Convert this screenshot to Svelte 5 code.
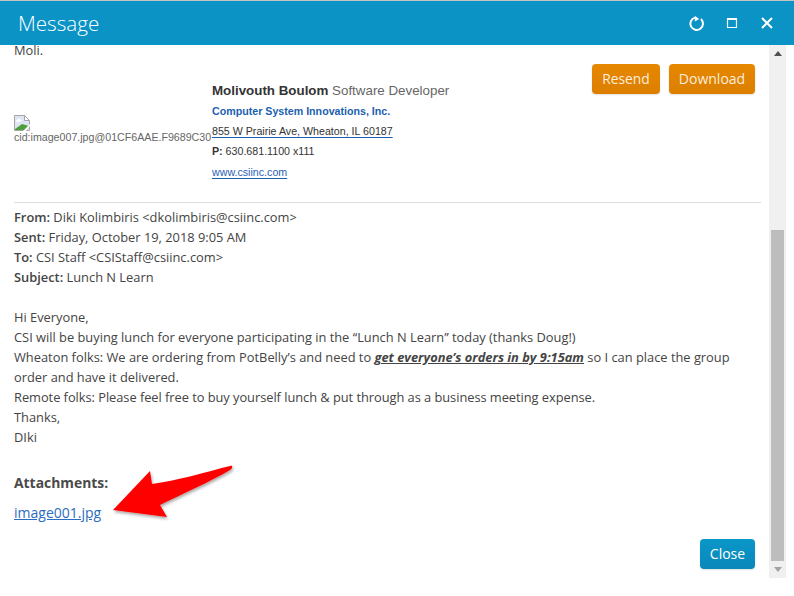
<script>
  const headers = [
    ['From:', 'Diki Kolimbiris <dkolimbiris@csiinc.com>'],
    ['Sent:', 'Friday, October 19, 2018 9:05 AM'],
    ['To:', 'CSI Staff <CSIStaff@csiinc.com>'],
    ['Subject:', 'Lunch N Learn']
  ];
</script>

<div class="dialog">
  <header class="titlebar">
    <h1>Message</h1>
    <div class="tools">
      <svg width="18" height="18" viewBox="0 0 18 18" fill="none" stroke="#fff" stroke-width="2">
        <path d="M7 3.6A6.3 6.3 0 1 0 13 5.1" />
        <path d="M6.8 1.8 L11.2 5 L6.8 7.6 Z" fill="#fff" stroke="none" />
      </svg>
      <svg width="12" height="12" viewBox="0 0 12 12" fill="none" stroke="#fff">
        <path d="M1.5 2 H10.5 V10.5 H1.5 Z" stroke-width="1.2" />
        <path d="M1 2 H11" stroke-width="2" />
      </svg>
      <svg class="x" width="14" height="14" viewBox="0 0 14 14" fill="none" stroke="#fff" stroke-width="2">
        <path d="M2 2 L12 12 M12 2 L2 12" />
      </svg>
    </div>
  </header>

  <div class="main">
    <div class="content">
      <p class="moli">Moli.</p>
      <div class="signature">
        <div class="broken">
          <svg width="16" height="16" viewBox="0 0 16 16">
            <path d="M0.5 0.5 H10.5 L15.5 5.5 V15.5 H0.5 Z" fill="#dfe6f3" stroke="#a5a5a5" />
            <path d="M10.5 0.5 V5.5 H15.5 Z" fill="#fff" stroke="#a5a5a5" />
            <path d="M2 6 C4 3 7 4 8 6 C6 6 4 7 2 7 Z" fill="#fff" />
            <path d="M1 15 L1 14 L8 9 L15 11 L12 15 Z" fill="#4f9e3c" />
            <path d="M9 16 L16 9 V11 L12 16 Z" fill="#fff" />
          </svg>
          <span>cid:image007.jpg@01CF6AAE.F9689C30</span>
        </div>
        <div class="card">
          <div class="name"><b>Molivouth Boulom</b> <span>Software Developer</span></div>
          <div class="company">Computer System Innovations, Inc.</div>
          <div class="addr"><span>855 W Prairie Ave, Wheaton, IL 60187</span></div>
          <div class="phone"><b>P:</b> 630.681.1100 x111</div>
          <div class="web"><span>www.csiinc.com</span></div>
        </div>
      </div>
      <hr />
      <div class="meta">
        {#each headers as [k, v]}
          <div><b>{k}</b> {v}</div>
        {/each}
      </div>
      <div class="body">
        <div>Hi Everyone,</div>
        <div>CSI will be buying lunch for everyone participating in the “Lunch N Learn” today (thanks Doug!)</div>
        <div>Wheaton folks: We are ordering from PotBelly’s and need to <b class="em">get everyone’s orders in by 9:15am</b> so I can place the group order and have it delivered.</div>
        <div class="tight">Remote folks: Please feel free to buy yourself lunch &amp; put through as a business meeting expense.</div>
        <div>Thanks,</div>
        <div>DIki</div>
      </div>
      <div class="att-label">Attachments:</div>
      <div class="att-link">image001.jpg</div>
      <div class="footer"><button class="close">Close</button></div>
    </div>
    <div class="scrollbar">
      <svg class="arrow" width="8" height="5" viewBox="0 0 8 5"><path d="M0 5 L4 0 L8 5 Z" fill="#505050" /></svg>
      <div class="track"><div class="thumb"></div></div>
      <svg class="arrow" width="8" height="5" viewBox="0 0 8 5"><path d="M0 0 L4 5 L8 0 Z" fill="#a3a3a3" /></svg>
    </div>

    <div class="actions">
      <button class="orange">Resend</button>
      <button class="orange">Download</button>
    </div>

    <svg class="pointer" width="120" height="55" viewBox="0 0 120 55">
      <defs>
        <filter id="sh" x="-20%" y="-20%" width="140%" height="150%">
          <feDropShadow dx="1" dy="2" stdDeviation="1.5" flood-color="#000" flood-opacity="0.35" />
        </filter>
      </defs>
      <path d="M-1 45 L36 6 L38 19 C62 16 92 7 116 1 C119 0 119 3 116 5 C96 17 70 28 46 40 L53 52 Z"
        fill="#fe0000" filter="url(#sh)" />
    </svg>
  </div>
</div>

<style>
  :global(body) { margin: 0; background: #fff; }
  .dialog {
    width: 794px;
    height: 596px;
    display: flex;
    flex-direction: column;
    border-top: 1px solid #c4c4c4;
    box-sizing: border-box;
    overflow: hidden;
    font-family: "Open Sans", sans-serif;
    font-size: 12.85px;
    color: #444;
  }
  .titlebar {
    height: 44px;
    flex: none;
    background: #0b93c6;
    display: flex;
    align-items: center;
    justify-content: space-between;
    padding: 0 20px 0 18px;
  }
  h1 {
    margin: 0;
    font-size: 20.6px;
    font-weight: 300;
    color: #fff;
    line-height: 1;
  }
  .tools { display: flex; align-items: center; gap: 20px; }
  .x { margin-left: 2px; }
  .main { position: relative; flex: 1; display: flex; min-height: 0; padding-right: 8px; padding-bottom: 18px; }
  .content { flex: 1; min-width: 0; padding: 0 8px 0 14px; overflow: hidden; display: flex; flex-direction: column; }
  .moli { margin: 0; line-height: 10px; height: 12px; }
  .signature { display: flex; height: 145px; box-sizing: border-box; }
  .broken { width: 198px; padding-top: 58px; white-space: nowrap; font-family: "Liberation Sans", sans-serif; font-size: 10.65px; color: #666; line-height: 12px; }
  .broken svg { display: block; }
  .card { font-family: "Liberation Sans", sans-serif; padding-top: 24px; font-size: 10.66px; color: #333; white-space: nowrap; }
  .card > div { height: 20px; line-height: 20px; }
  .name { font-size: 13.35px; color: #666; }
  .name b { color: #333; }
  .company { color: #1c5fb0; font-weight: bold; }
  .addr span { text-decoration: underline; text-decoration-color: #1c5fb0; text-underline-offset: 2px; }
  .web span { color: #2a62b8; text-decoration: underline; text-decoration-color: #1c5fb0; text-underline-offset: 2px; }
  .card > .web { margin-top: 1px; }
  hr { border: 0; border-top: 1px solid #ddd; margin: 0; }
  .meta { padding-top: 4px; }
  .meta div, .body div { line-height: 20px; }
  .meta b { font-weight: 600; }
  .body { padding-top: 20px; }
  .tight { letter-spacing: -0.04px; }
  .em { font-style: italic; text-decoration: underline; font-weight: 700; }
  .att-label { margin-top: 26px; font-size: 13.9px; font-weight: 700; line-height: 20px; color: #4a4a4a; }
  .att-link { margin-top: 10px; font-size: 14px; line-height: 20px; color: #2a6cc0; text-decoration: underline; }
  .footer { display: flex; justify-content: flex-end; margin-top: 16px; padding-right: 6px; }
  button {
    border: 0;
    border-radius: 4px;
    font-family: "Open Sans", sans-serif;
    font-size: 14px;
    color: #fff;
    height: 30px;
    padding: 0 0 2px;
    box-shadow: 0 1px 2px rgba(0,0,0,.12);
  }
  .orange { background: linear-gradient(#e78800, #dc7e00); color: #fbeedd; }
  .orange:first-child { width: 68px; font-size: 13.8px; }
  .orange:last-child { width: 86px; }
  .close { width: 55px; background: linear-gradient(#0b96c8, #0a87b9); }
  .scrollbar { width: 17px; flex: none; background: #f0f0f0; display: flex; flex-direction: column; align-items: center; }
  .arrow { flex: none; margin: 6px 0; }
  .track { flex: 1; width: 100%; position: relative; }
  .thumb { position: absolute; left: 2px; right: 2px; top: 168px; bottom: 0; background: #bdbdbd; }
  .actions { position: absolute; top: 19px; right: 39px; display: flex; gap: 9px; }
  .pointer { position: absolute; left: 114px; top: 420px; overflow: visible; }
</style>
